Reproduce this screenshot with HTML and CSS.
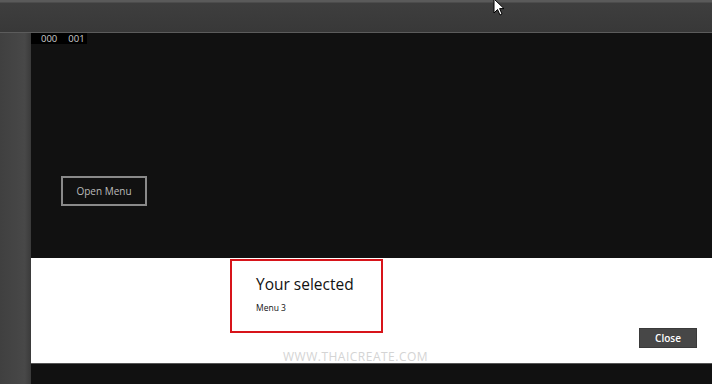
FILE: index.html
```html
<!DOCTYPE html>
<html lang="en">
<head>
    <meta charset="UTF-8">
    <title>Menu Flyout</title>
    <link rel="stylesheet" href="styles.css">
</head>
<body>
    <div class="top-bar"></div>
    <div class="frame">
        <div class="side"></div>
        <div class="app">
            <div class="stage">
                <div class="counter"><span>000</span><span>001</span></div>
                <button class="open-btn">Open Menu</button>
            </div>
            <div class="band">
                <div class="result">
                    <h2>Your selected</h2>
                    <p>Menu 3</p>
                </div>
                <button class="close-btn">Close</button>
                <div class="watermark">WWW.THAICREATE.COM</div>
            </div>
            <div class="bottom"></div>
        </div>
    </div>

    <svg class="cursor" width="14" height="20" viewBox="0 0 14 20">
        <path d="M1 1 L1 15 L4.5 11.5 L7 17 L9 16 L6.6 10.6 L11 10.6 Z" fill="#fff" stroke="#000" stroke-width="1"/>
    </svg>
</body>
</html>
```

FILE: styles.css
```css
body {
    margin: 0;
    height: 384px;
    overflow: hidden;
    background: #444;
    font-family: 'Open Sans', sans-serif;
    position: relative;
}

.top-bar {
    height: 32px;
    background: linear-gradient(#5a5a5a 0, #5a5a5a 2px, #3e3e3e 3px, #383838 100%);
    border-bottom: 1px solid #5c5c5c;
}

.frame {
    display: flex;
    height: 351px;
}

.side {
    width: 31px;
    background: linear-gradient(90deg, #404040, #484848 80%, #3a3a3a);
}

.app {
    flex: 1;
    display: flex;
    flex-direction: column;
}

.stage {
    height: 225px;
    background: #111;
    display: flex;
    flex-direction: column;
    align-items: flex-start;
}

.counter {
    background: #000;
    color: #ccc;
    font-size: 9.5px;
    line-height: 11px;
    padding: 0 2px 0 10px;
    display: flex;
    gap: 11px;
}

.open-btn {
    margin: 132px 0 0 30px;
    width: 86px;
    height: 30px;
    background: transparent;
    border: 2px solid #8a8a8a;
    color: #bbb;
    font-family: 'Open Sans', sans-serif;
    font-size: 10px;
    padding: 0;
}

.band {
    height: 105px;
    background: #fff;
    display: flex;
    align-items: flex-start;
    position: relative;
}

.result {
    margin: 1px 0 0 199px;
    height: 70px;
    border: 2px solid #d7141a;
    padding-left: 24px;
    width: 125px;
}

.result h2 {
    margin: 12px 0 0;
    font-size: 15.5px;
    font-weight: 400;
    color: #111;
    line-height: 22px;
}

.result p {
    margin: 7px 0 0;
    font-size: 8.5px;
    color: #111;
}

.close-btn {
    margin: 70px 15px 0 auto;
    width: 58px;
    height: 20px;
    background: #474747;
    border: 1px solid #3a3a3a;
    color: #fff;
    font-family: 'Open Sans', sans-serif;
    font-size: 10px;
    font-weight: 600;
    padding: 0;
}

.watermark {
    position: absolute;
    left: 252px;
    top: 92px;
    font-size: 12px;
    line-height: 13px;
    color: #d4d4d4;
    letter-spacing: 0.5px;
}

.bottom {
    flex: 1;
    background: #111;
    border-top: 1px solid #555;
}

.cursor {
    position: absolute;
    left: 493px;
    top: -2px;
}
```
